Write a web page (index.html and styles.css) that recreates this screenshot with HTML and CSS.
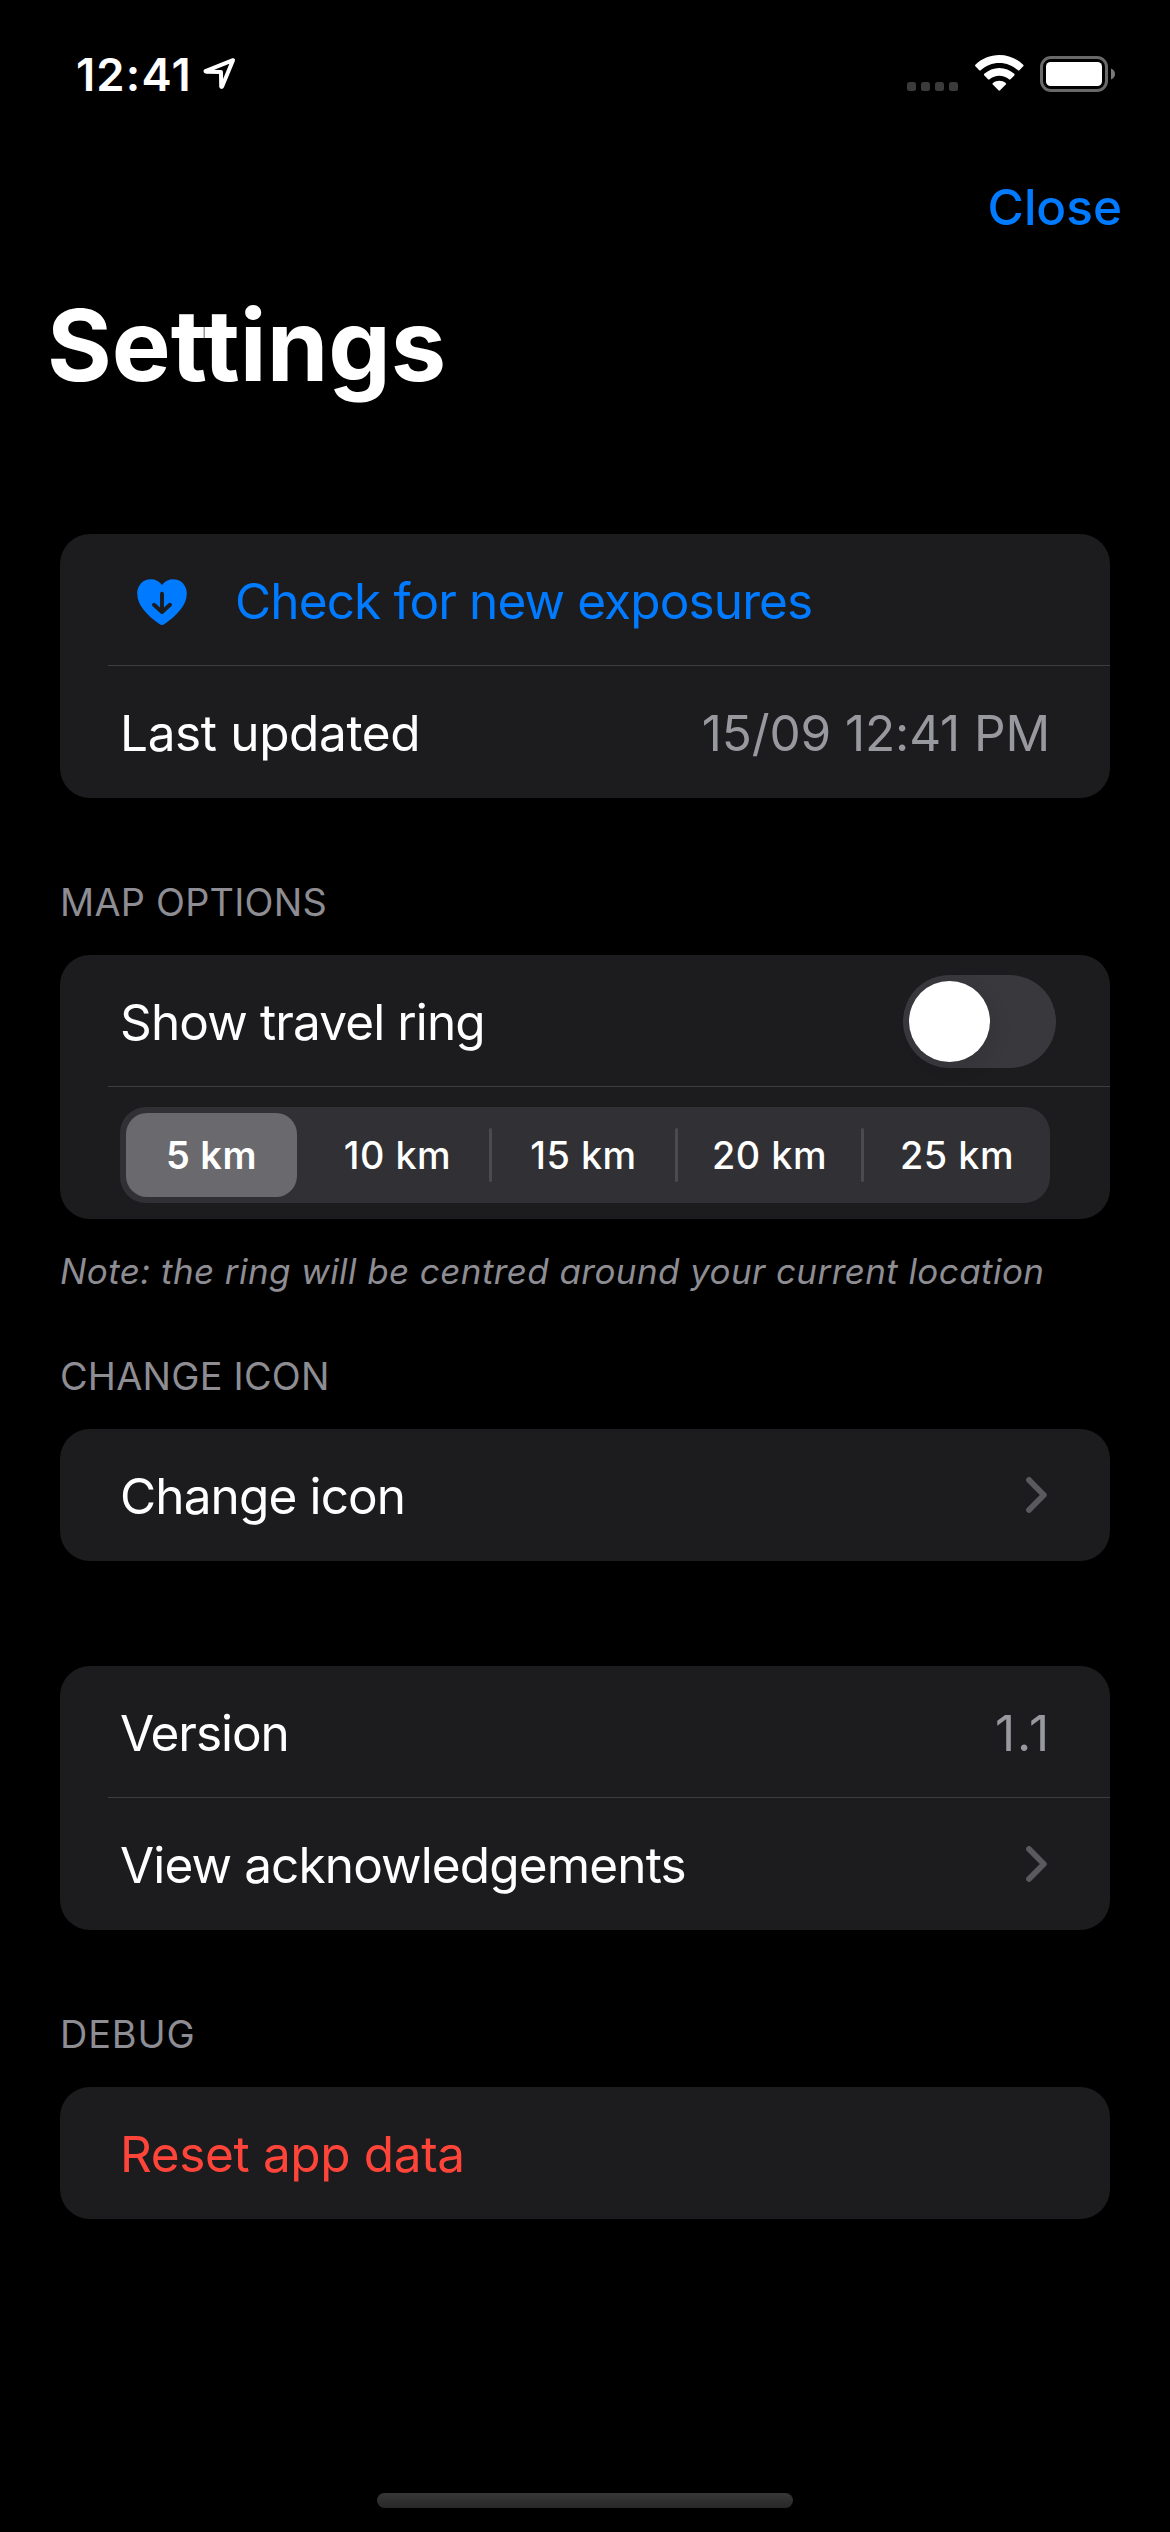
FILE: index.html
```html
<!DOCTYPE html>
<html lang="en">
<head>
<meta charset="utf-8">
<title>Settings</title>
<link rel="stylesheet" href="styles.css">
</head>
<body>
<div class="screen">
  <header class="status-bar">
    <div class="status-left">
      <span class="time">12:41</span>
      <svg class="location" width="34" height="34" viewBox="0 0 34 34" fill="none" stroke="#fff" stroke-width="4" stroke-linejoin="round"><path d="M31 3.200 3.500 14.200Q3.400 14.700 4.500 14.700L19 15 19.200 29.400Q19.600 30.400 20.200 29.300L31 3.200Z"/></svg>
    </div>
    <div class="status-right">
      <svg width="51" height="37" viewBox="0 0 51 37" fill="#3b3b3b"><rect y="27" width="9" height="9" rx="2.5"/><rect x="14" y="27" width="9" height="9" rx="2.5"/><rect x="28" y="27" width="9" height="9" rx="2.5"/><rect x="42" y="27" width="9" height="9" rx="2.5"/></svg>
      <svg width="49" height="37" viewBox="0 0 49 37" fill="#fff"><path d="M24.3 0C33.3 0 41.800 3.500 48.200 9.700Q49 10.500 48.200 11.300L44.400 15.200Q43.700 15.900 42.900 15.200C37.900 10.500 31.300 7.900 24.300 7.900S10.700 10.500 5.700 15.200Q4.900 15.900 4.200 15.200L.4 11.300Q-.4 10.500 .4 9.700C6.800 3.500 15.300 0 24.300 0Z"/><path d="M24.300 12.900C29.900 12.900 35.200 15 39.300 18.800Q40.100 19.600 39.300 20.400L35.500 24.300Q34.800 25 34 24.300C31.300 22 27.900 20.700 24.300 20.700S17.300 22 14.600 24.300Q13.800 25 13.100 24.300L9.300 20.400Q8.500 19.600 9.300 18.800C13.400 15 18.700 12.900 24.300 12.900Z"/><path d="M24.300 25.700C26.600 25.700 28.900 26.500 30.700 28Q31.500 28.700 30.800 29.500L25.100 35.300Q24.300 36.100 23.500 35.300L17.800 29.500Q17.100 28.700 17.900 28C19.700 26.500 22 25.700 24.300 25.700Z"/></svg>
      <svg width="75" height="37" viewBox="0 0 75 37"><rect x="1.500" y="2.500" width="65" height="33" rx="9.500" fill="none" stroke="#696969" stroke-width="3"/><rect x="6" y="7" width="56" height="24" rx="4.500" fill="#fff"/><path d="M71 13.500C73.600 14.500 75 16.700 75 19S73.600 23.500 71 24.500Z" fill="#7a7a7a"/></svg>
    </div>
  </header>

  <nav class="nav-bar"><a class="close">Close</a></nav>
  <h1 class="title">Settings</h1>

  <main class="groups">
    <section class="card">
      <div class="row row-action">
        <svg width="50" height="47" viewBox="0 0 50 47"><path d="M25 6C22.300 2.200 18.300 .2 13.800 .2C6 .2 .2 6.200 .2 14.500C.2 26.500 10.500 36.500 22.400 45.100Q25 47 27.600 45.100C39.500 36.500 49.800 26.500 49.800 14.500C49.800 6.200 44 .2 36.200 .2C31.700 .2 27.700 2.200 25 6Z" fill="#007aff"/><path d="M25 14.800V32.500M17 25.800 25 33 33 25.800" fill="none" stroke="#1c1c1e" stroke-width="3.900" stroke-linecap="round" stroke-linejoin="round"/></svg>
        <span class="label link">Check for new exposures</span>
      </div>
      <div class="separator"></div>
      <div class="row">
        <span class="label label-wide">Last updated</span>
        <span class="value">15/09 12:41 PM</span>
      </div>
    </section>

    <h2 class="section-title">MAP OPTIONS</h2>
    <section class="card">
      <div class="row row-toggle">
        <span class="label">Show travel ring</span>
        <span class="toggle"><span class="knob"></span></span>
      </div>
      <div class="separator"></div>
      <div class="segments">
        <span class="segment selected">5 km</span>
        <span class="segment">10 km</span>
        <i class="divider"></i>
        <span class="segment">15 km</span>
        <i class="divider"></i>
        <span class="segment">20 km</span>
        <i class="divider"></i>
        <span class="segment last">25 km</span>
      </div>
    </section>
    <p class="note">Note: the ring will be centred around your current location</p>

    <h2 class="section-title after-note">CHANGE ICON</h2>
    <section class="card">
      <div class="row">
        <span class="label">Change icon</span>
        <svg class="chevron" width="21" height="36" viewBox="0 0 21 36"><path d="M3 3 17.800 18 3 33"/></svg>
      </div>
    </section>

    <section class="card card-about">
      <div class="row">
        <span class="label label-tight">Version</span>
        <span class="value value-version">1.1</span>
      </div>
      <div class="separator"></div>
      <div class="row">
        <span class="label">View acknowledgements</span>
        <svg class="chevron" width="21" height="36" viewBox="0 0 21 36"><path d="M3 3 17.800 18 3 33"/></svg>
      </div>
    </section>

    <h2 class="section-title debug">DEBUG</h2>
    <section class="card">
      <div class="row"><span class="label label-wide danger">Reset app data</span></div>
    </section>
  </main>

  <div class="home-indicator"></div>
</div>
</body>
</html>
```
FILE: styles.css
```css
* { box-sizing: border-box; }

body {
  margin: 0;
  background: #000;
  color: #fff;
  font-family: Inter, "Liberation Sans", sans-serif;
}

h1, h2, p { margin: 0; }
svg { display: block; flex: none; }

.screen {
  display: flex;
  flex-direction: column;
  width: 1170px;
  height: 2532px;
  overflow: hidden;
}

/* Status bar */
.status-bar {
  display: flex;
  justify-content: space-between;
  height: 132px;
  padding: 45px 55px 0 76px;
}
.status-left { display: flex; gap: 10px; }
.time {
  font-size: 45.4px;
  font-weight: 600;
  line-height: 60px;
  letter-spacing: 1.17px;
}
.location { margin-top: 12px; }
.status-right { display: flex; gap: 17px; padding-top: 10px; }
.status-right svg:nth-child(2) { margin-right: -1px; }

/* Navigation */
.nav-bar {
  display: flex;
  justify-content: flex-end;
  align-items: center;
  height: 153px;
  padding: 0 48px 3px 0;
}
.close {
  color: #007aff;
  font-size: 49.5px;
  font-weight: 500;
  line-height: 60px;
}
.title {
  padding-left: 47px;
  font-size: 99px;
  font-weight: 700;
  line-height: 120px;
}

/* Grouped list */
.groups { padding: 129px 60px 0; }
.card {
  background: #1c1c1e;
  border-radius: 30px;
}
.card-about { margin-top: 105px; }
.row {
  display: flex;
  align-items: center;
  justify-content: space-between;
  height: 132px;
  padding: 0 60px;
}
.row:not(:last-child) { height: 131px; }
.row-action {
  justify-content: flex-start;
  gap: 48px;
  padding-left: 77px;
}
.row-action svg { margin-top: 6px; }
.row-toggle { padding-right: 54px; }
.separator {
  height: 1px;
  margin-left: 48px;
  background: #3d3d40;
}
.label, .value {
  padding-top: 2px;
  font-size: 49.5px;
  line-height: 60px;
  letter-spacing: -0.87px;
  white-space: nowrap;
}
.label-wide { letter-spacing: -0.36px; }
.label-tight { letter-spacing: -1.07px; }
.link { color: #007aff; }
.danger { color: #ff453a; }
.value { color: #98989f; letter-spacing: -0.12px; }
.value-version { margin-right: -1px; letter-spacing: 1.9px; }
.chevron {
  margin-right: 3px;
  fill: none;
  stroke: #5a5a5e;
  stroke-width: 5.8;
  stroke-linecap: round;
  stroke-linejoin: round;
}

.section-title {
  padding: 79px 0 28px;
  color: #8d8d93;
  font-size: 37.8px;
  font-weight: 400;
  line-height: 50px;
  letter-spacing: 0.25px;
}
.after-note { padding-top: 60px; }
.debug { letter-spacing: 0.9px; }
.note {
  margin-top: 32px;
  color: #8d8d93;
  font-size: 35px;
  font-style: italic;
  line-height: 40px;
  letter-spacing: 0.41px;
  white-space: nowrap;
}

/* Toggle switch */
.toggle {
  width: 153px;
  height: 93px;
  margin-top: 2px;
  padding: 6px;
  border-radius: 47px;
  background: #39393d;
}
.knob {
  display: block;
  width: 81px;
  height: 81px;
  border-radius: 50%;
  background: #fff;
  box-shadow: 6px 6px 18px rgba(0, 0, 0, 0.08);
}

/* Segmented control */
.segments {
  display: flex;
  align-items: center;
  height: 96px;
  margin: 20px 60px 0;
  padding-left: 6px;
  border-radius: 26px;
  background: #313135;
}
.card:has(.segments) { padding-bottom: 16px; }
.segment {
  width: 183px;
  font-size: 37.8px;
  font-weight: 500;
  line-height: 84px;
  letter-spacing: 0.5px;
  text-align: center;
}
.segment.selected {
  width: 171px;
  margin-right: 9px;
  border-radius: 21px;
  background: #69696e;
  font-weight: 600;
}
.segment.last { width: 186px; }
.divider {
  width: 3px;
  height: 54px;
  border-radius: 2px;
  background: #4a4a4f;
}

.home-indicator {
  width: 416px;
  height: 15px;
  margin: auto auto 24px;
  border-radius: 8px;
  background: linear-gradient(#373737, #282828);
}
```
